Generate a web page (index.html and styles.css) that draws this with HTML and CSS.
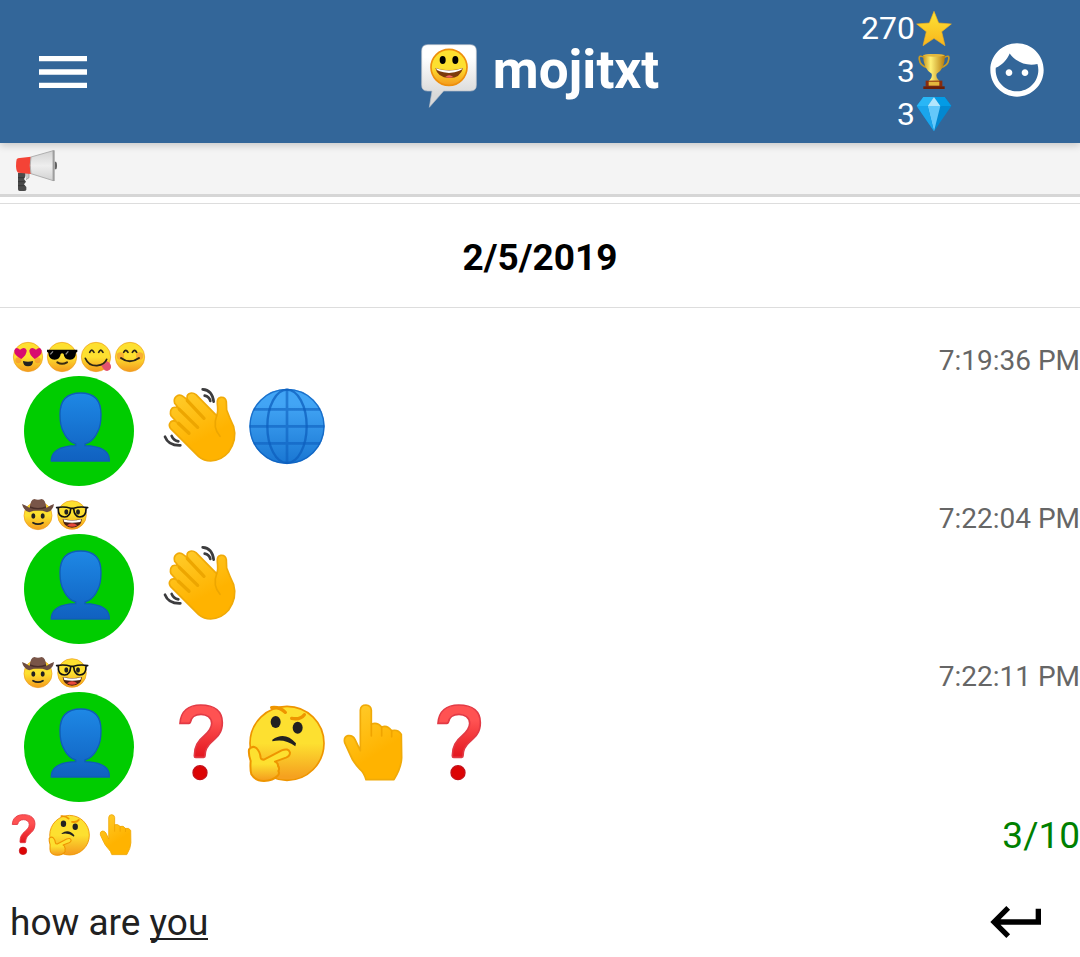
FILE: index.html
```html
<!DOCTYPE html>
<html lang="en">
<head>
  <meta charset="UTF-8" />
  <meta name="viewport" content="width=device-width, initial-scale=1.0"/>
  <title>mojitxt</title>
  <link rel="stylesheet" href="styles.css">
</head>
<body>

  <!-- emoji sprites -->
  <svg class="sprites" aria-hidden="true">
    <defs>
      <linearGradient id="gFace" x1="0" y1="0" x2="0" y2="1">
        <stop offset="0.5" stop-color="#fde030"/>
        <stop offset="0.95" stop-color="#f5a11f"/>
      </linearGradient>
      <linearGradient id="gHand" x1="0" y1="0" x2="0.5" y2="1">
        <stop offset="0.1" stop-color="#ffca28"/>
        <stop offset="0.75" stop-color="#ffb300"/>
      </linearGradient>
      <linearGradient id="gGlobe" x1="0" y1="0" x2="0" y2="1">
        <stop offset="0.2" stop-color="#42a5f5"/>
        <stop offset="1" stop-color="#1976d2"/>
      </linearGradient>
      <linearGradient id="gBust" x1="0" y1="0" x2="0" y2="1">
        <stop offset="0" stop-color="#1e88e5"/>
        <stop offset="1" stop-color="#1061c0"/>
      </linearGradient>
      <linearGradient id="gRed" x1="0" y1="0" x2="0" y2="1">
        <stop offset="0.3" stop-color="#ff5252"/>
        <stop offset="1" stop-color="#e3161e"/>
      </linearGradient>
      <linearGradient id="gStar" x1="0" y1="0" x2="0" y2="1">
        <stop offset="0.1" stop-color="#fddf33"/>
        <stop offset="1" stop-color="#f8b51c"/>
      </linearGradient>
      <linearGradient id="gGold" x1="0" y1="0" x2="1" y2="0">
        <stop offset="0" stop-color="#c9951a"/>
        <stop offset="0.35" stop-color="#fff176"/>
        <stop offset="1" stop-color="#b57a0c"/>
      </linearGradient>
      <linearGradient id="gBubble" x1="0" y1="0" x2="0" y2="1">
        <stop offset="0.2" stop-color="#ffffff"/>
        <stop offset="0.8" stop-color="#d9d9d9"/>
      </linearGradient>
      <linearGradient id="gCone" x1="0" y1="0" x2="0" y2="1">
        <stop offset="0" stop-color="#d2d2d2"/>
        <stop offset="0.5" stop-color="#eeeeee"/>
        <stop offset="1" stop-color="#d2d2d2"/>
      </linearGradient>
    </defs>

    <symbol id="wave" viewBox="0 0 258 258">
      <path d="M41 134Q33 122 41 114Q49 107 59 114L42 95Q37 81 46 72Q55 67 65 73L53 58Q49 44 58 37Q69 29 79 38L92 48Q87 34 96 29Q107 24 117 32L179 95Q184 83 181 60Q179 42 191 40Q205 38 208 53L209 78Q217 100 230 128Q241 166 215 204Q193 230 161 231Q141 231 125 218Z" fill="url(#gHand)" stroke="#f0aa08" stroke-width="5" stroke-linejoin="round"/>
      <path d="M91 50L141 103M67 76L122 130M64 118L96 148" fill="none" stroke="#eda600" stroke-width="10" stroke-linecap="round"/>
      <path d="M179 95Q166 130 189 157" fill="none" stroke="#eda600" stroke-width="5" stroke-linecap="round"/>
      <path d="M137 16Q166 18 170 53M143 35Q157 38 160 51M24 158Q34 185 70 184M44 156Q50 170 64 172" fill="none" stroke="#3c3c3e" stroke-width="8" stroke-linecap="round"/>
    </symbol>

    <symbol id="globe" viewBox="0 0 258 258">
      <circle cx="132" cy="127" r="113" fill="url(#gGlobe)"/>
      <g fill="none" stroke="#0d5fbe" stroke-opacity="0.75">
        <circle cx="132" cy="127" r="111" stroke-width="4"/>
        <ellipse cx="132" cy="127" rx="59" ry="110" stroke-width="7"/>
        <path d="M132 16V238M20 127H244M32 76H232M32 178H232" stroke-width="8" stroke-opacity="0.6"/>
      </g>
    </symbol>

    <symbol id="question" viewBox="0 0 258 258">
      <path d="M69 70C71 33 95 15 131 15C174 15 196 35 196 68C196 98 181 111 164 126C149 139 144 153 144 168Q144 172 140 172L116 172Q112 172 112 167C112 138 123 123 141 108C156 95 164 85 164 70C164 53 149 43 132 43C114 43 102 53 100 67Q99 70 96 70Z" fill="url(#gRed)" stroke="#e23a45" stroke-width="5"/>
      <circle cx="129" cy="218" r="21" fill="#dc0404" stroke="#c4101a" stroke-width="4"/>
    </symbol>

    <symbol id="thinking" viewBox="0 0 258 258">
      <circle cx="132" cy="130" r="111" fill="url(#gFace)" stroke="#ee9500" stroke-width="5"/>
      <ellipse cx="98" cy="66" rx="15" ry="18" fill="#212121"/>
      <ellipse cx="164" cy="83" rx="15" ry="18" fill="#212121"/>
      <path d="M86 23Q110 20 127 37M146 55Q172 60 184 44" fill="none" stroke="#ee9500" stroke-width="10" stroke-linecap="round"/>
      <path d="M88 119Q126 92 159 130L157 139Q124 114 88 124Z" fill="#212121"/>
      <path d="M18 148Q29 135 41 145Q51 155 53 173Q54 179 63 179L116 151Q136 143 141 158Q141 168 129 173L96 185Q106 189 105 198Q111 205 106 213Q111 221 103 228Q91 241 63 243Q36 242 25 223Q21 208 23 183Q16 163 18 148Z" fill="url(#gFace)" stroke="#ee9500" stroke-width="6" stroke-linejoin="round"/>
    </symbol>

    <symbol id="pointup" viewBox="0 0 258 258">
      <path d="M94 152L94 30Q95 15 111 15Q126 16 127 31L127 72Q145 65 158 81Q175 74 188 92Q207 87 217 103L218 173Q217 203 195 239L111 239Q105 218 93 208Q73 188 63 163L47 128Q43 111 57 107Q71 105 78 118Z" fill="url(#gHand)" stroke="#f0aa08" stroke-width="5" stroke-linejoin="round"/>
      <path d="M127 72V108M158 81V108M188 92V110" fill="none" stroke="#f0a400" stroke-width="5" stroke-linecap="round"/>
    </symbol>

    <symbol id="hearteyes" viewBox="0 0 102 102">
      <circle cx="51" cy="51" r="44" fill="url(#gFace)" stroke="#ed9a1a" stroke-width="2"/>
      <circle cx="22" cy="61" r="9" fill="#f7882f" opacity="0.6"/>
      <circle cx="80" cy="61" r="9" fill="#f7882f" opacity="0.6"/>
      <path d="M31 57Q8 46 10 31Q15 18 27 29Q41 18 47 31Q48 44 31 57ZM71 57Q54 44 55 31Q61 18 75 29Q87 18 92 31Q94 46 71 57Z" fill="#d80b6f"/>
      <path d="M36 63Q51 68 66 63Q66 79 51 79Q36 79 36 63Z" fill="#212121"/>
    </symbol>

    <symbol id="shades" viewBox="0 0 102 102">
      <circle cx="51" cy="51" r="44" fill="url(#gFace)" stroke="#ed9a1a" stroke-width="2"/>
      <path d="M6 29H97V35L93 38Q92 58 75 59Q57 59 56 42Q51 37 47 42Q45 59 29 59Q11 58 10 38L6 35Z" fill="#000"/>
      <path d="M16 43L24 34M62 43L70 34" stroke="#8b8b8b" stroke-width="4"/>
      <path d="M37 67Q51 76 66 67" fill="none" stroke="#3a2c12" stroke-width="6" stroke-linecap="round"/>
    </symbol>

    <symbol id="yum" viewBox="0 0 102 102">
      <circle cx="51" cy="51" r="44" fill="url(#gFace)" stroke="#ed9a1a" stroke-width="2"/>
      <path d="M32 37Q38 24 45 37M59 37Q65 24 72 37" fill="none" stroke="#2c2517" stroke-width="5" stroke-linecap="round"/>
      <path d="M66 75Q79 72 83 63Q98 70 96 84Q89 98 77 91Q72 86 66 75Z" fill="#e2536f"/>
      <path d="M19 55Q29 78 54 77Q77 74 83 58" fill="none" stroke="#2c2517" stroke-width="5" stroke-linecap="round"/>
    </symbol>

    <symbol id="blush" viewBox="0 0 102 102">
      <circle cx="51" cy="51" r="44" fill="url(#gFace)" stroke="#ed9a1a" stroke-width="2"/>
      <circle cx="22" cy="48" r="11" fill="#f47b36" opacity="0.5"/>
      <circle cx="80" cy="48" r="11" fill="#f47b36" opacity="0.5"/>
      <path d="M32 37Q38 25 45 37M58 37Q65 25 71 37" fill="none" stroke="#2c2517" stroke-width="5" stroke-linecap="round"/>
      <path d="M24 54Q50 74 78 54" fill="none" stroke="#2c2517" stroke-width="6" stroke-linecap="round"/>
    </symbol>

    <symbol id="cowboy" viewBox="0 0 102 102">
      <circle cx="51" cy="53" r="42" fill="url(#gFace)" stroke="#ed9a1a" stroke-width="2"/>
      <ellipse cx="37" cy="54" rx="6" ry="8" fill="#212121"/>
      <ellipse cx="65" cy="54" rx="6" ry="8" fill="#212121"/>
      <path d="M36 74Q51 83 66 74" fill="none" stroke="#212121" stroke-width="5" stroke-linecap="round"/>
      <path d="M26 32Q28 4 40 3Q51 8 62 3Q74 4 76 32Z" fill="#795548"/>
      <path d="M27 25Q51 35 75 25L76 33Q51 42 26 33Z" fill="#4a2e28"/>
      <path d="M3 18Q13 22 25 29Q51 39 77 29Q89 22 99 18Q97 38 78 43Q51 31 25 43Q7 38 3 18Z" fill="#6d4c41"/>
    </symbol>

    <symbol id="nerd" viewBox="0 0 102 102">
      <circle cx="51" cy="51" r="43" fill="url(#gFace)" stroke="#ed9a1a" stroke-width="2"/>
      <path d="M23 63Q51 70 81 63Q78 89 51 89Q26 89 23 63Z" fill="#4a1f12"/>
      <path d="M25 64Q51 71 79 64L76 72Q51 77 28 72Z" fill="#fff"/>
      <path d="M36 82Q51 70 67 82Q51 91 36 82Z" fill="#e8483a"/>
      <ellipse cx="34" cy="42" rx="6" ry="8" fill="#212121"/>
      <ellipse cx="69" cy="42" rx="6" ry="8" fill="#212121"/>
      <path d="M5 29Q27 24 47 31H56Q76 24 98 29M10 31Q8 57 29 57Q46 56 47 32M56 32Q58 56 74 57Q94 57 93 31" fill="none" stroke="#111" stroke-width="5" stroke-linecap="round"/>
    </symbol>

    <symbol id="bust" viewBox="0 0 330 330">
      <path d="M170 51C213 51 231 74 231 115C231 160 223 160 217 175Q205 197 183 204V209Q254 211 256 250V255H82V250Q86 211 155 209V204Q134 197 122 175C116 160 108 160 108 115C108 74 126 51 170 51Z" fill="url(#gBust)" stroke="#0f5db8" stroke-width="4"/>
    </symbol>

    <symbol id="star" viewBox="0 0 114 114">
      <path d="M57 4L71 39L109 42L80 65L90 107L57 85L24 107L34 65L5 42L43 39Z" fill="url(#gStar)" stroke="#f4b01c" stroke-width="2" stroke-linejoin="round"/>
    </symbol>

    <symbol id="trophy" viewBox="0 0 114 114">
      <path d="M29 14Q10 3 13 20Q15 39 38 44M86 14Q105 3 101 20Q99 39 76 44" fill="none" stroke="#c99b24" stroke-width="5"/>
      <path d="M24 6Q57 0 90 6Q90 48 65 62Q61 73 74 84H41Q53 73 50 62Q25 48 24 6Z" fill="url(#gGold)"/>
      <ellipse cx="57" cy="7" rx="32" ry="4" fill="#e3b83d"/>
      <path d="M32 83H82V101H32Z" fill="#8a2c0d"/>
      <path d="M41 86H73V98H41Z" fill="#e3b83d"/>
      <path d="M25 100H89V108H25Z" fill="#6d1f07"/>
    </symbol>

    <symbol id="gem" viewBox="0 0 114 114">
      <path d="M25 3H89L109 30L57 106L5 30Z" fill="#0288d1"/>
      <path d="M25 3H57L38 30H5Z" fill="#29b6f6"/>
      <path d="M57 3H89L109 30H76Z" fill="#039be5"/>
      <path d="M57 3L76 30H38Z" fill="#b3e5fc"/>
      <path d="M38 30H76L57 106Z" fill="#64c8fa"/>
      <path d="M5 30H38L57 106Z" fill="#1aa5ec"/>
    </symbol>

    <symbol id="megaphone" viewBox="0 0 132 132">
      <path d="M119 38H123Q126 40 126 49Q126 60 123 61H119Z" fill="#616161"/>
      <path d="M32 72H42V86L33 92" fill="#c9c9c9" stroke="#8d8d8d" stroke-width="2"/>
      <path d="M9 72H31V82L27 90L33 98L27 106L34 114V122Q33 126 27 126H14Q9 126 9 121Z" fill="#4a4a4a"/>
      <path d="M9 86H29M9 98H28M9 110H29" stroke="#2e2e2e" stroke-width="2"/>
      <path d="M5 31Q8 27 14 27L48 23V75L10 71Q4 70 3 52Q3 38 5 31Z" fill="#f44336"/>
      <path d="M48 24Q43 50 48 74L115 95V5Z" fill="url(#gCone)" stroke="#b0b0b0" stroke-width="3"/>
      <path d="M116 4V96" stroke="#9e9e9e" stroke-width="6"/>
    </symbol>
  </svg>

  <header class="topbar">
    <button class="icon-btn" aria-label="Menu">
      <svg viewBox="0 0 24 24"><path d="M3 18h18v-2H3v2zm0-5h18v-2H3v2zm0-7v2h18V6H3z"/></svg>
    </button>

    <h1 class="brand">
      <svg class="brand-logo" viewBox="0 0 168 192">
        <path d="M20 2H148Q166 2 166 20V124Q166 141 148 141H68L25 190L33 141H20Q2 141 2 124V20Q2 2 20 2Z" fill="url(#gBubble)" stroke="#b9c0c8" stroke-width="2"/>
        <circle cx="84" cy="70" r="54" fill="url(#gFace)" stroke="#ee8f0c" stroke-width="5"/>
        <ellipse cx="65" cy="48" rx="9" ry="12"/>
        <ellipse cx="103" cy="48" rx="9" ry="12"/>
        <path d="M43 72Q84 86 126 72Q118 103 84 102Q50 101 43 72Z" fill="#7c3a0b"/>
        <path d="M44 73Q84 86 125 73Q122 83 84 87Q48 84 44 73Z" fill="#fff"/>
        <path d="M73 99Q84 88 97 99Q84 104 73 99Z" fill="#f0645e"/>
      </svg>
      mojitxt
    </h1>

    <div class="topbar-right">
      <ul class="stats">
        <li>270<svg class="emoji"><use href="#star"/></svg></li>
        <li>3<svg class="emoji"><use href="#trophy"/></svg></li>
        <li>3<svg class="emoji"><use href="#gem"/></svg></li>
      </ul>
      <button class="icon-btn profile" aria-label="Profile">
        <svg viewBox="0 0 24 24"><path d="M9 11.75c-.69 0-1.25.56-1.25 1.25s.56 1.25 1.25 1.25 1.25-.56 1.25-1.25-.56-1.25-1.25-1.25zm6 0c-.69 0-1.25.56-1.25 1.25s.56 1.25 1.25 1.25 1.25-.56 1.25-1.25-.56-1.25-1.25-1.25zM12 2C6.48 2 2 6.48 2 12s4.48 10 10 10 10-4.48 10-10S17.52 2 12 2zm0 18c-4.41 0-8-3.59-8-8 0-.29.02-.58.05-.86 2.36-1.05 4.23-2.98 5.21-5.37C11.07 8.33 14.05 10 17.42 10c.78 0 1.53-.09 2.25-.26.21.71.33 1.47.33 2.26 0 4.41-3.59 8-8 8z"/></svg>
      </button>
    </div>
  </header>

  <div class="announce">
    <svg><use href="#megaphone"/></svg>
  </div>

  <main class="chat">
    <h2 class="day">2/5/2019</h2>

    <div class="messages">
      <article class="message">
        <div class="message-head">
          <div class="nick nick-long">
            <svg class="emoji"><use href="#hearteyes"/></svg>
            <svg class="emoji"><use href="#shades"/></svg>
            <svg class="emoji"><use href="#yum"/></svg>
            <svg class="emoji"><use href="#blush"/></svg>
          </div>
          <time>7:19:36 PM</time>
        </div>
        <div class="message-body">
          <svg class="avatar"><use href="#bust"/></svg>
          <div class="text">
            <svg class="emoji"><use href="#wave"/></svg>
            <svg class="emoji"><use href="#globe"/></svg>
          </div>
        </div>
      </article>

      <article class="message">
        <div class="message-head">
          <div class="nick">
            <svg class="emoji"><use href="#cowboy"/></svg>
            <svg class="emoji"><use href="#nerd"/></svg>
          </div>
          <time>7:22:04 PM</time>
        </div>
        <div class="message-body">
          <svg class="avatar"><use href="#bust"/></svg>
          <div class="text">
            <svg class="emoji"><use href="#wave"/></svg>
          </div>
        </div>
      </article>

      <article class="message">
        <div class="message-head">
          <div class="nick">
            <svg class="emoji"><use href="#cowboy"/></svg>
            <svg class="emoji"><use href="#nerd"/></svg>
          </div>
          <time>7:22:11 PM</time>
        </div>
        <div class="message-body">
          <svg class="avatar"><use href="#bust"/></svg>
          <div class="text">
            <svg class="emoji"><use href="#question"/></svg>
            <svg class="emoji"><use href="#thinking"/></svg>
            <svg class="emoji"><use href="#pointup"/></svg>
            <svg class="emoji"><use href="#question"/></svg>
          </div>
        </div>
      </article>
    </div>
  </main>

  <form class="composer">
    <div class="preview">
      <div class="preview-emoji">
        <svg class="emoji"><use href="#question"/></svg>
        <svg class="emoji"><use href="#thinking"/></svg>
        <svg class="emoji"><use href="#pointup"/></svg>
      </div>
      <span class="count">3/10</span>
    </div>
    <div class="entry">
      <input type="text" class="entry-text" aria-label="Message" value="how are you">
      <button class="icon-btn" aria-label="Send">
        <svg viewBox="0 0 24 24"><path d="M19 7v4H5.83l3.58-3.59L8 6l-6 6 6 6 1.41-1.41L5.83 13H21V7z"/></svg>
      </button>
    </div>
  </form>

</body>
</html>
```
FILE: styles.css
```css
* {
  box-sizing: border-box;
}

body {
  margin: 0;
  font-family: Roboto, sans-serif;
  background: #fff;
  color: #000;
}

svg {
  display: block;
  flex: none;
}

.sprites {
  position: absolute;
  width: 0;
  height: 0;
}

.icon-btn {
  flex: none;
  padding: 0;
  border: none;
  background: none;
  color: inherit;
  cursor: pointer;
}

.icon-btn svg {
  width: 64px;
  height: 64px;
  fill: currentColor;
}

/* top bar */

.topbar {
  position: relative;
  display: grid;
  grid-template-columns: 1fr auto 1fr;
  align-items: center;
  padding: 7px 31px;
  background: #336699;
  color: #fff;
  box-shadow: 0 2px 8px rgba(0, 0, 0, 0.2);
}

.topbar > .icon-btn {
  justify-self: start;
}

.brand {
  display: flex;
  align-items: flex-start;
  gap: 16px;
  margin: 0;
  font-size: 53px;
  line-height: 68px;
}

.brand-logo {
  width: 56px;
  height: 64px;
  margin-top: 8px;
}

.topbar-right {
  display: flex;
  align-items: center;
  justify-content: flex-end;
  gap: 32px;
}

.profile {
  padding-bottom: 4px;
}

.stats {
  margin: 0;
  padding: 0;
  list-style: none;
  font-size: 32px;
  line-height: 43px;
}

.stats li {
  display: flex;
  align-items: center;
  justify-content: flex-end;
}

.stats .emoji {
  width: 38px;
  height: 38px;
}

.announce {
  padding: 6px 15px 1px;
  background: #f4f4f4;
  border-bottom: 3px solid #d6d6d6;
}

.announce svg {
  width: 44px;
  height: 44px;
}

/* chat */

.day {
  margin: 6px 0 32px;
  padding-top: 5px;
  border-top: 1px solid #ddd;
  border-bottom: 1px solid #ddd;
  font-size: 37px;
  line-height: 98px;
  text-align: center;
}

.messages {
  display: flex;
  flex-direction: column;
  gap: 12px;
}

.message-head {
  display: flex;
  justify-content: space-between;
  height: 36px;
}

.nick {
  display: flex;
  padding-left: 21px;
}

.nick-long {
  padding-left: 11px;
}

.nick .emoji {
  width: 34px;
  height: 34px;
}

.message time {
  color: #666;
  font-size: 28px;
  line-height: 42px;
}

.message-body {
  display: flex;
  gap: 23px;
  padding-left: 24px;
}

.avatar {
  width: 110px;
  height: 110px;
  border-radius: 50%;
  background: #00cc00;
}

.text {
  display: flex;
  padding-top: 8px;
}

.text .emoji {
  width: 86px;
  height: 86px;
}

/* composer */

.composer {
  padding-top: 10px;
}

.preview {
  display: flex;
  align-items: center;
  justify-content: space-between;
}

.preview-emoji {
  display: flex;
}

.preview .emoji {
  width: 46px;
  height: 46px;
}

.count {
  color: #008000;
  font-size: 37px;
}

.entry {
  display: flex;
  align-items: center;
  padding: 32px 31px 0 10px;
}

.entry-text {
  flex: 1;
  min-width: 0;
  height: 64px;
  padding: 0;
  border: none;
  outline: none;
  /* underline of the word being composed */
  background: linear-gradient(#212121, #212121) 140px 48px / 58px 2px no-repeat;
  color: #212121;
  font-family: inherit;
  font-size: 37px;
}
```
